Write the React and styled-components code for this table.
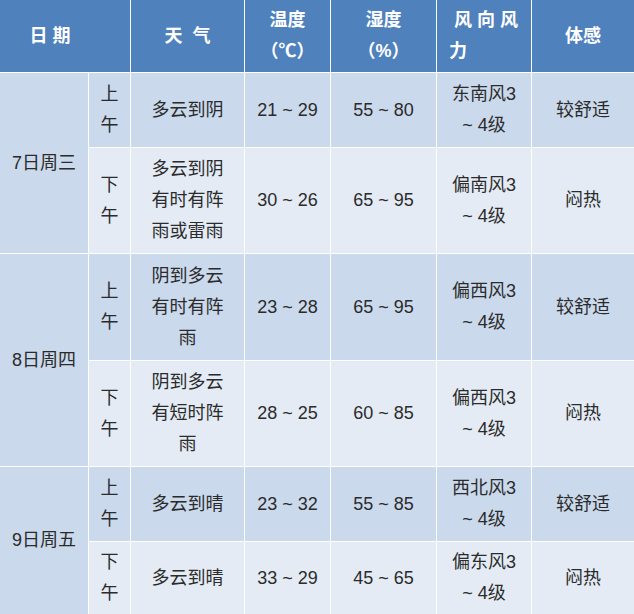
import React from "react";
import styled, { createGlobalStyle } from "styled-components";

const GlobalStyle = createGlobalStyle`
  html, body {
    margin: 0;
    padding: 0;
    background: #ffffff;
  }
  body {
    font-family: "Liberation Sans", "Noto Sans CJK SC", sans-serif;
  }
`;

const days = [
  {
    date: "7日周三",
    rows: [
      { period: "上午", weather: ["多云到阴"], temp: "21 ~ 29", hum: "55 ~ 80", wind: ["东南风3", "~ 4级"], feel: "较舒适" },
      { period: "下午", weather: ["多云到阴", "有时有阵", "雨或雷雨"], temp: "30 ~ 26", hum: "65 ~ 95", wind: ["偏南风3", "~ 4级"], feel: "闷热" },
    ],
  },
  {
    date: "8日周四",
    rows: [
      { period: "上午", weather: ["阴到多云", "有时有阵", "雨"], temp: "23 ~ 28", hum: "65 ~ 95", wind: ["偏西风3", "~ 4级"], feel: "较舒适" },
      { period: "下午", weather: ["阴到多云", "有短时阵", "雨"], temp: "28 ~ 25", hum: "60 ~ 85", wind: ["偏西风3", "~ 4级"], feel: "闷热" },
    ],
  },
  {
    date: "9日周五",
    rows: [
      { period: "上午", weather: ["多云到晴"], temp: "23 ~ 32", hum: "55 ~ 85", wind: ["西北风3", "~ 4级"], feel: "较舒适" },
      { period: "下午", weather: ["多云到晴"], temp: "33 ~ 29", hum: "45 ~ 65", wind: ["偏东风3", "~ 4级"], feel: "闷热" },
    ],
  },
];

const Lines = ({ items }) => items.map((t, i) => <Line key={i}>{t}</Line>);

export default function App() {
  return (
    <>
      <GlobalStyle />
      <Table>
        <HeadCell $span={2} $padRight={30}>日 期</HeadCell>
        <HeadCell>天  气</HeadCell>
        <HeadCell>
          <Line>温度</Line>
          <Line>（℃）</Line>
        </HeadCell>
        <HeadCell>
          <Line>湿度</Line>
          <Line>（%）</Line>
        </HeadCell>
        <HeadCell $left>
          <Line>{"\u00a0风 向 风"}</Line>
          <Line>力</Line>
        </HeadCell>
        <HeadCell>体感</HeadCell>

        {days.map(day => (
          <React.Fragment key={day.date}>
            <DateCell>{day.date}</DateCell>
            {day.rows.map((row, i) => {
              const tone = i === 0 ? "dark" : "light";
              return (
                <React.Fragment key={row.period}>
                  <Cell $tone={tone}>
                    <Lines items={row.period.split("")} />
                  </Cell>
                  <Cell $tone={tone}>
                    <Lines items={row.weather} />
                  </Cell>
                  <Cell $tone={tone}>{row.temp}</Cell>
                  <Cell $tone={tone}>{row.hum}</Cell>
                  <Cell $tone={tone}>
                    <Lines items={row.wind} />
                  </Cell>
                  <Cell $tone={tone}>{row.feel}</Cell>
                </React.Fragment>
              );
            })}
          </React.Fragment>
        ))}
      </Table>
    </>
  );
}

const Table = styled.div`
  display: grid;
  width: 634px;
  grid-template-columns: 88px 41px 113px 85px 105px 94px 1fr;
  grid-template-rows: 72px 74px 105px 106px 105px 74px 72px;
  gap: 1px;
  background: #ffffff;
  font-size: 18px;
  line-height: 31px;
`;

const Line = styled.div`
  white-space: pre;
`;

const HeadCell = styled.div`
  grid-column: span ${props => props.$span || 1};
  background: #4f81bd;
  color: #ffffff;
  font-weight: bold;
  display: flex;
  flex-direction: column;
  justify-content: center;
  align-items: ${props => (props.$left ? "flex-start" : "center")};
  padding-left: ${props => (props.$left ? "12px" : "0")};
  padding-right: ${props => props.$padRight || 0}px;
  white-space: pre;
`;

const Cell = styled.div`
  background: ${props => (props.$tone === "dark" ? "#cad9eb" : "#e4ebf5")};
  color: #2b2b2b;
  display: flex;
  flex-direction: column;
  justify-content: center;
  align-items: center;
  text-align: center;
  white-space: pre;
`;

const DateCell = styled(Cell)`
  grid-row: span 2;
  background: #cad9eb;
`;
